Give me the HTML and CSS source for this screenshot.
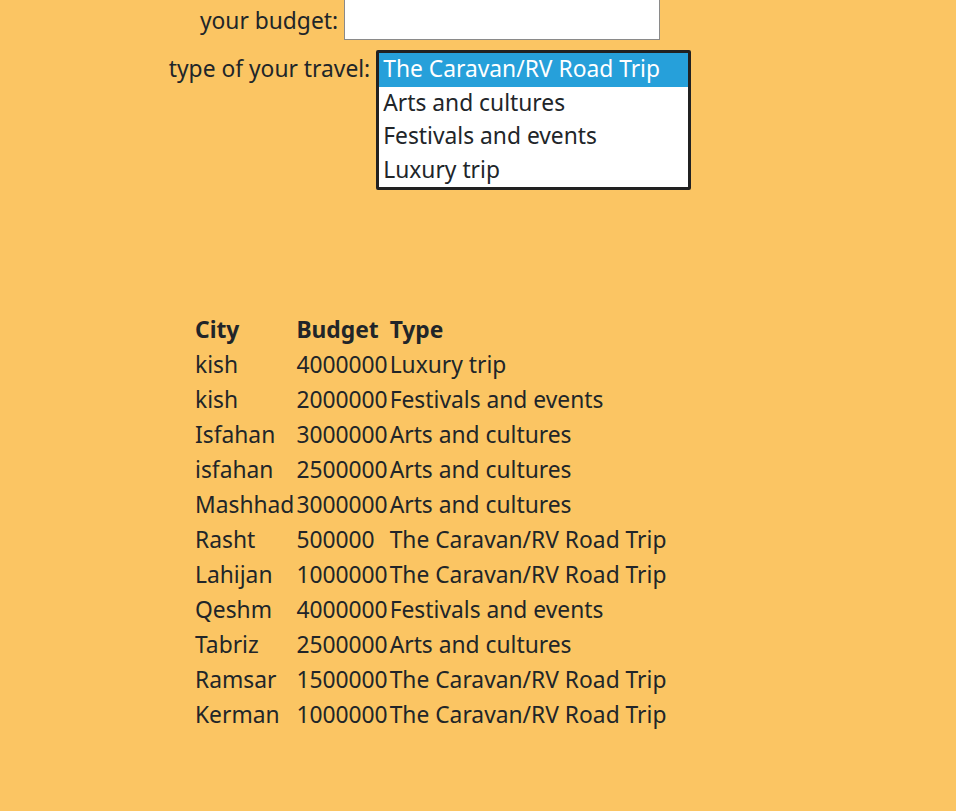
FILE: index.html
```html
<!DOCTYPE html>
<html lang="en">
<head>
<meta charset="utf-8">
<title>Travel planner</title>
<link rel="stylesheet" href="styles.css">
</head>
<body>
<main class="page">
  <form class="search">
    <div class="field field-budget">
      <label for="budget" class="label">your budget:</label>
      <input id="budget" class="text-input" type="text">
    </div>
    <div class="field field-type">
      <label for="type" class="label">type of your travel:</label>
      <select id="type" class="listbox" size="4">
        <option selected>The Caravan/RV Road Trip</option>
        <option>Arts and cultures</option>
        <option>Festivals and events</option>
        <option>Luxury trip</option>
      </select>
    </div>
  </form>

  <table class="results">
    <thead>
      <tr><th>City</th><th>Budget</th><th>Type</th></tr>
    </thead>
    <tbody>
      <tr><td>kish</td><td>4000000</td><td>Luxury trip</td></tr>
      <tr><td>kish</td><td>2000000</td><td>Festivals and events</td></tr>
      <tr><td>Isfahan</td><td>3000000</td><td>Arts and cultures</td></tr>
      <tr><td>isfahan</td><td>2500000</td><td>Arts and cultures</td></tr>
      <tr><td>Mashhad</td><td>3000000</td><td>Arts and cultures</td></tr>
      <tr><td>Rasht</td><td>500000</td><td>The Caravan/RV Road Trip</td></tr>
      <tr><td>Lahijan</td><td>1000000</td><td>The Caravan/RV Road Trip</td></tr>
      <tr><td>Qeshm</td><td>4000000</td><td>Festivals and events</td></tr>
      <tr><td>Tabriz</td><td>2500000</td><td>Arts and cultures</td></tr>
      <tr><td>Ramsar</td><td>1500000</td><td>The Caravan/RV Road Trip</td></tr>
      <tr><td>Kerman</td><td>1000000</td><td>The Caravan/RV Road Trip</td></tr>
    </tbody>
  </table>
</main>
</body>
</html>
```

FILE: styles.css
```css
html, body {
  margin: 0;
  padding: 0;
  background: #fbc563;
}

body {
  font-family: "Noto Sans", "Open Sans", sans-serif;
  font-size: 22.8px;
  color: #212529;
  min-height: 811px;
}

.page {
  width: 860px;
  display: flex;
  flex-direction: column;
}

.search {
  margin-top: -5px;
  display: flex;
  flex-direction: column;
  align-items: center;
  gap: 10px;
}

.field {
  display: flex;
  gap: 6px;
}

.field-budget {
  align-items: flex-end;
}

.field-budget .label {
  padding-bottom: 2px;
}

.field-type {
  align-items: baseline;
}

.label {
  line-height: 34px;
}

.text-input {
  box-sizing: border-box;
  width: 316px;
  height: 45px;
  border: 1px solid #8a8a8a;
  background: #fff;
  font: inherit;
  padding: 0 4px;
}

.listbox {
  box-sizing: border-box;
  width: 315px;
  height: 140px;
  border: 3px solid #212121;
  background: #fff;
  font: inherit;
  color: #212529;
  padding: 0;
  overflow: hidden;
  outline: none;
}

.listbox option {
  height: 33.5px;
  line-height: 33.5px;
  padding: 0 4px;
  box-sizing: border-box;
}

.listbox option:checked {
  background: linear-gradient(#26a0da, #26a0da);
  color: #fff;
}

.results {
  align-self: flex-start;
  margin-top: 122px;
  margin-left: 194px;
  border-collapse: collapse;
  border-spacing: 0;
}

.results th,
.results td {
  padding: 0 1px;
  height: 35px;
  text-align: left;
  vertical-align: middle;
  white-space: nowrap;
}

.results th {
  font-weight: 700;
}
```
